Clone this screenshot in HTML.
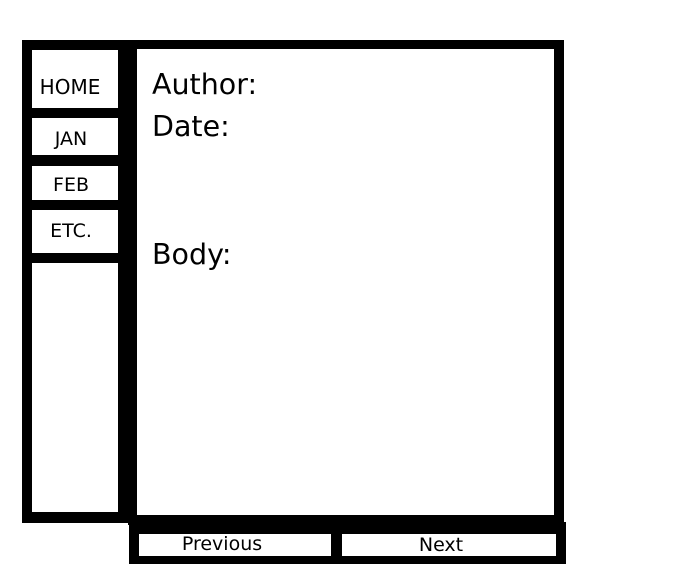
<!DOCTYPE html>
<html><head><style>
body{margin:0;width:696px;height:564px;background:#fff;position:relative;overflow:hidden;font-family:"DejaVu Sans","Liberation Sans",sans-serif}
div{position:absolute}
.b{background:#000}
.w{background:#fff;text-align:center;color:#000}
.n{font-size:19px}
.t{font-size:28.5px;left:152px;color:#000}
</style></head><body>
<div class="b" style="left:22px;top:40px;width:110px;height:483px"></div>
<div class="b" style="left:128px;top:40px;width:436px;height:485px"></div>
<div class="b" style="left:129px;top:522px;width:437px;height:42px"></div>
<div class="w n" style="left:32px;top:50px;width:76px;height:58px;line-height:74px;padding-right:10px;font-size:20px">HOME</div>
<div class="w n" style="left:32px;top:118px;width:78px;height:37px;line-height:42px;padding-right:8px">JAN</div>
<div class="w n" style="left:32px;top:166px;width:78px;height:34px;line-height:38px;padding-right:8px">FEB</div>
<div class="w n" style="left:32px;top:210px;width:78px;height:43px;line-height:42px;padding-right:8px">ETC.</div>
<div class="w" style="left:32px;top:263px;width:86px;height:249px"></div>
<div class="w" style="left:137px;top:49px;width:417px;height:466px"></div>
<div class="t" style="top:68px">Author:</div>
<div class="t" style="top:110px">Date:</div>
<div class="t" style="top:238px">Body:</div>
<div class="w n" style="left:139px;top:534px;width:166px;height:22px;line-height:20px;padding-right:26px">Previous</div>
<div class="w n" style="left:342px;top:534px;width:198px;height:22px;line-height:22px;padding-right:16px">Next</div>
</body></html>
